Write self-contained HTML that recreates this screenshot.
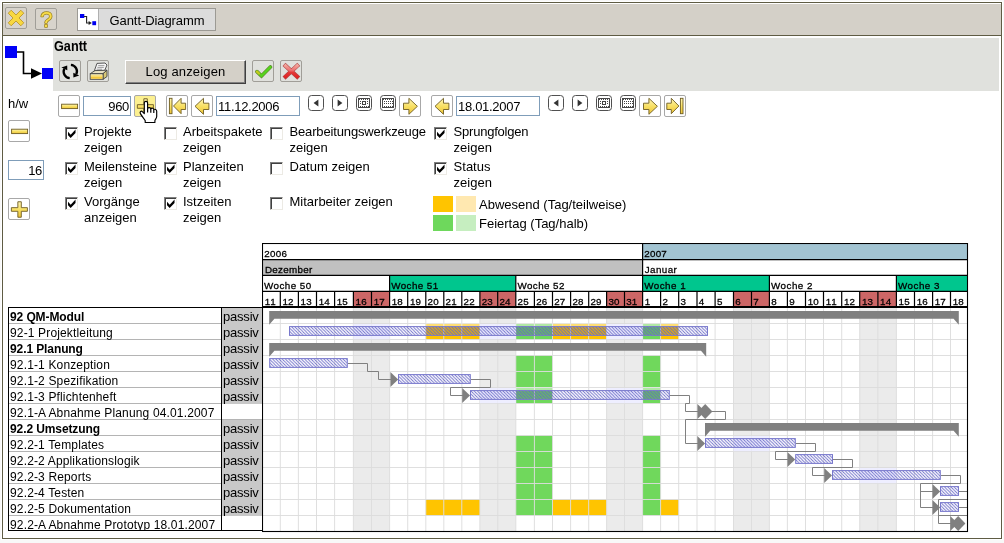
<!DOCTYPE html>
<html lang="de"><head><meta charset="utf-8"><title>Gantt-Diagramm</title>
<style>
html,body{margin:0;padding:0;}
body{width:1004px;height:543px;overflow:hidden;background:#f8f8f8;font-family:"Liberation Sans",Arial,sans-serif;font-size:13px;color:#000;position:relative;}
.abs{position:absolute;}
#frame{left:2px;top:2px;width:998px;height:535px;border:1px solid #5f5c44;background:#fff;}
#topbar{left:3px;top:3px;width:998px;height:33px;background:#d4d0c8;border-top:1px solid #fff;border-bottom:1px solid #5f5c44;box-sizing:border-box;}
.ibtn{position:absolute;width:20px;height:20px;border:1px solid #a09e98;border-radius:2px;background:#d8d4cc;}
.wbtn{position:absolute;width:20px;height:20px;border:1px solid #a8a8a8;border-radius:2px;background:#fff;}
.wbtn svg,.ibtn svg{position:absolute;left:0;top:0;}
#tab{left:77px;top:8px;width:139px;height:23px;border:1px solid #9c9a94;background:#dcdcdc;box-sizing:border-box;}
#tabicon{left:0;top:0;width:20px;height:21px;background:#fff;border-right:1px solid #b0b0b0;}
#tabtxt{left:21px;top:0;width:116px;height:21px;line-height:23px;text-align:center;font-size:13px;letter-spacing:-0.08px;}
#panel{left:53px;top:38px;width:946px;height:53px;background:#e0e1dd;}
#ptitle{left:54px;top:39px;font-weight:bold;font-size:14px;line-height:15px;transform-origin:0 0;transform:scaleX(0.905);}
#logbtn{left:125px;top:60px;width:121px;height:24px;box-sizing:border-box;background:#d4d0c8;border:1px solid;border-color:#fff #404040 #404040 #fff;box-shadow:inset -1px -1px 0 #808080;text-align:center;line-height:21px;font-size:13px;letter-spacing:0.15px;}
.inp{position:absolute;box-sizing:border-box;border:1px solid #7f9db9;background:#fff;height:20px;line-height:20px;font-size:13px;letter-spacing:-0.3px;padding:0 1px 0 1px;}
.cb{position:absolute;width:13px;height:13px;box-sizing:border-box;border:1px solid;border-color:#808080 #eceae4 #eceae4 #808080;background:#fff;box-shadow:inset 1px 1px 0 #404040;}
.cb svg{position:absolute;left:2px;top:1px;}
.lbl{position:absolute;font-size:13px;line-height:16px;white-space:nowrap;}
.sw{position:absolute;width:20px;height:16px;}
.sbtn{position:absolute;width:14px;height:14px;border:1px solid #505050;border-radius:3.5px;background:#fff;}
#ltab{left:8px;top:307px;width:254px;height:224px;box-sizing:border-box;border:1px solid #000;border-right:none;overflow:hidden;background:#fff;}
.r{position:absolute;left:0;width:253px;height:15px;border-bottom:1px solid #b4b4b4;font-size:12px;line-height:15px;white-space:nowrap;letter-spacing:0.15px;}
.r b{letter-spacing:-0.1px;}
.r span.n{position:absolute;left:1px;top:1.5px;}
.st{position:absolute;left:213px;width:40px;height:16px;background:#c8c8c8;font-size:13px;line-height:18px;letter-spacing:-0.2px;text-indent:1px;overflow:hidden;}
#stline{left:212px;top:0;width:1px;height:224px;background:#000;}
</style></head><body><div id="root" style="position:absolute;left:0;top:0;width:1004px;height:543px;will-change:transform;">
<svg class="abs" width="0" height="0" style="left:0;top:0"><defs><linearGradient id="yg" x1="0" y1="0" x2="0" y2="1"><stop offset="0" stop-color="#fff6b8"/><stop offset="0.5" stop-color="#f8e064"/><stop offset="1" stop-color="#eec438"/></linearGradient></defs></svg>
<div class="abs" style="left:1px;top:1px;width:1002px;height:539px;background:#fff"></div>
<div id="frame" class="abs"></div>
<div id="topbar" class="abs"></div>
<div class="ibtn" style="left:5px;top:7px"><svg width="20" height="20" viewBox="0 0 20 20"><path d="M2.2 5.2 L5.2 2.2 L10 7 L14.8 2.2 L17.8 5.2 L13 10 L17.8 14.8 L14.8 17.8 L10 13 L5.2 17.8 L2.2 14.8 L7 10 Z" fill="#f8d840" stroke="#b89020" stroke-width="0.8"/></svg></div>
<div class="ibtn" style="left:35px;top:8px"><svg width="20" height="20" viewBox="0 0 20 20"><text x="10.4" y="18" text-anchor="middle" font-family="Liberation Sans, sans-serif" font-size="22" fill="#f8dc48" stroke="#9c8420" stroke-width="1.5" paint-order="stroke" stroke-linejoin="round">?</text></svg></div>
<div id="tab" class="abs"><div id="tabicon" class="abs"><svg width="20" height="21" viewBox="0 0 20 21"><rect x="2" y="5" width="4.3" height="4" fill="#0000f0"/><rect x="14.3" y="12.2" width="3.8" height="4" fill="#0000f0"/><path d="M6 7.5 H8.6 V14 H11" fill="none" stroke="#222" stroke-width="1.1"/><path d="M10.6 12 L13.8 14 L10.6 16Z" fill="#222"/></svg></div><div id="tabtxt" class="abs">Gantt-Diagramm</div></div>
<svg class="abs" style="left:0;top:40px" width="56" height="44" viewBox="0 40 56 44"><rect x="5" y="46" width="12" height="12" fill="#0000f8"/><rect x="42" y="68" width="12" height="11" fill="#0000f8"/><path d="M17 52 H23.5 V73.5 H33" fill="none" stroke="#000" stroke-width="1.6"/><path d="M31 68.2 L42 73.5 L31 78.8Z" fill="#000"/></svg>
<div id="panel" class="abs"></div>
<div id="ptitle" class="abs">Gantt</div>
<div class="ibtn" style="left:59px;top:60px;background:#e0e1dd"><svg width="20" height="20" viewBox="0 0 20 20"><path d="M9.7 17.1 A6.6 6.6 0 0 1 4.3 7.7" fill="none" stroke="#000" stroke-width="2.3"/><path d="M7.3 9.2 L1.4 6.5 L7.2 4.4Z" fill="#000"/><path d="M10.9 3.9 A6.6 6.6 0 0 1 16.3 13.3" fill="none" stroke="#000" stroke-width="2.3"/><path d="M13.3 11.8 L19.2 14.5 L13.4 16.6Z" fill="#000"/></svg></div>
<div class="ibtn" style="left:87px;top:60px;background:#e0e1dd"><svg width="20" height="20" viewBox="0 0 20 20"><path d="M9 2.4 L17 2 L19 4 L16.6 9.6 L6.2 10.2Z" fill="#f6f6f6" stroke="#444" stroke-width="0.9" stroke-linejoin="round"/><path d="M10.2 4.6H16.4M9.4 6.4H15.8M8.6 8.2H14" stroke="#888" stroke-width="0.8"/><path d="M2.2 12.7 L7 9.6 L19 9.2 L15 12.7Z" fill="#e8e2c4" stroke="#444" stroke-width="0.9" stroke-linejoin="round"/><path d="M15 12.7 L19 9.2 V15.5 L15 18.3Z" fill="#d8c878" stroke="#444" stroke-width="0.9" stroke-linejoin="round"/><rect x="2.2" y="12.7" width="12.8" height="5.6" fill="#efe6b4" stroke="#444" stroke-width="0.9"/><rect x="2.9" y="14.2" width="11.4" height="3.5" fill="#f6c83a"/><rect x="2.9" y="14.2" width="11.4" height="1.4" fill="#fbe690"/></svg></div>
<div id="logbtn" class="abs">Log anzeigen</div>
<div class="ibtn" style="left:252px;top:60px;background:#e0e1dd"><svg width="20" height="20" viewBox="0 0 20 20"><path d="M4 10.6 L8.5 15 L17.4 6" fill="none" stroke="#5e7e2c" stroke-width="3.7" stroke-linecap="round" stroke-linejoin="miter"/><path d="M4 10.6 L8.5 15 L17.4 6" fill="none" stroke="#56d21e" stroke-width="2.5" stroke-linecap="round" stroke-linejoin="miter"/><path d="M4 10.6 L6 12.5" fill="none" stroke="#c4c81e" stroke-width="2.3" stroke-linecap="round"/></svg></div>
<div class="ibtn" style="left:280px;top:60px;background:#e0e1dd"><svg width="20" height="20" viewBox="0 0 20 20"><defs><linearGradient id="rx" gradientUnits="userSpaceOnUse" x1="0" y1="3" x2="0" y2="17"><stop offset="0" stop-color="#f4b0a4"/><stop offset="0.45" stop-color="#ec7070"/><stop offset="0.6" stop-color="#e43838"/><stop offset="1" stop-color="#e02020"/></linearGradient></defs><path d="M4.6 4.8 L16.2 15.6 M16.2 4.8 L4.6 15.6" fill="none" stroke="#b04848" stroke-width="4.3" stroke-linecap="square"/><path d="M4.6 4.8 L16.2 15.6 M16.2 4.8 L4.6 15.6" fill="none" stroke="url(#rx)" stroke-width="3.2" stroke-linecap="square"/></svg></div>
<div class="lbl" style="left:8px;top:96px">h/w</div>
<div class="wbtn" style="left:58px;top:95px;background:#fff"><svg width="20" height="20" viewBox="0 0 20 20"><rect x="2.6" y="8.2" width="16" height="4.4" fill="url(#yg)" stroke="#6e5c20" stroke-width="0.9" stroke-linejoin="miter"/></svg></div>
<div class="inp" style="left:83px;top:96px;width:48px;text-align:right">960</div>
<div class="wbtn" style="left:134px;top:95px;background:#fcf090"><svg width="20" height="20" viewBox="0 0 20 20"><path d="M8.85 2.75 H12.3 V8.65 H18.4 V12.3 H12.3 V18.25 H8.85 V12.3 H2.35 V8.65 H8.85Z" fill="url(#yg)" stroke="#6e5c20" stroke-width="0.9" stroke-linejoin="miter"/></svg></div>
<div class="wbtn" style="left:166px;top:95px;background:#fff"><svg width="20" height="20" viewBox="0 0 20 20"><rect x="2.4" y="2.3" width="2.6" height="15.4" fill="url(#yg)" stroke="#6e5c20" stroke-width="0.9" stroke-linejoin="miter"/><path d="M6.5 10 L14.1 2.3 V7.2 H18.6 V13.5 H14.1 V17.7Z" fill="url(#yg)" stroke="#6e5c20" stroke-width="0.9" stroke-linejoin="miter"/></svg></div>
<div class="wbtn" style="left:191px;top:95px;background:#fff"><svg width="20" height="20" viewBox="0 0 20 20"><path d="M3 10.3 L11.5 2.3 V7.2 H16.9 V13.5 H11.5 V18.3Z" fill="url(#yg)" stroke="#6e5c20" stroke-width="0.9" stroke-linejoin="miter"/></svg></div>
<div class="inp" style="left:216px;top:96px;width:84px">11.12.2006</div>
<div class="sbtn" style="left:308px;top:95px"><svg class="abs" style="left:0;top:0" width="14" height="14" viewBox="0 0 14 14"><path d="M4.6 7 L9.4 3.4 V10.6Z" fill="#333"/></svg></div>
<div class="sbtn" style="left:332px;top:95px"><svg class="abs" style="left:0;top:0" width="14" height="14" viewBox="0 0 14 14"><path d="M9.4 7 L4.6 3.4 V10.6Z" fill="#333"/></svg></div>
<div class="sbtn" style="left:356px;top:95px"><svg class="abs" style="left:0;top:0" width="14" height="14" viewBox="0 0 14 14"><rect x="1" y="2" width="12" height="10" fill="#484848"/><rect x="2" y="4" width="10" height="7" fill="#fff"/><rect x="3" y="3" width="1" height="1" fill="#fff"/><rect x="5" y="3" width="1" height="1" fill="#fff"/><rect x="7" y="3" width="1" height="1" fill="#fff"/><rect x="9" y="3" width="1" height="1" fill="#fff"/><rect x="11" y="3" width="1" height="1" fill="#fff"/><rect x="3" y="10" width="1" height="1" fill="#484848"/><rect x="5" y="10" width="1" height="1" fill="#484848"/><rect x="7" y="10" width="1" height="1" fill="#484848"/><rect x="9" y="10" width="1" height="1" fill="#484848"/><rect x="11" y="10" width="1" height="1" fill="#484848"/><rect x="3" y="5" width="1" height="1" fill="#444"/><rect x="10" y="5" width="1" height="1" fill="#444"/><rect x="3" y="7" width="1" height="1" fill="#444"/><rect x="10" y="7" width="1" height="1" fill="#444"/><rect x="5.5" y="5.5" width="3" height="3" fill="#fff" stroke="#444" stroke-width="1"/></svg></div>
<div class="sbtn" style="left:380px;top:95px"><svg class="abs" style="left:0;top:0" width="14" height="14" viewBox="0 0 14 14"><rect x="1" y="2" width="12" height="10" fill="#484848"/><rect x="2" y="4" width="10" height="7" fill="#fff"/><rect x="3" y="3" width="1" height="1" fill="#fff"/><rect x="5" y="3" width="1" height="1" fill="#fff"/><rect x="7" y="3" width="1" height="1" fill="#fff"/><rect x="9" y="3" width="1" height="1" fill="#fff"/><rect x="11" y="3" width="1" height="1" fill="#fff"/><rect x="3" y="10" width="1" height="1" fill="#484848"/><rect x="5" y="10" width="1" height="1" fill="#484848"/><rect x="7" y="10" width="1" height="1" fill="#484848"/><rect x="9" y="10" width="1" height="1" fill="#484848"/><rect x="11" y="10" width="1" height="1" fill="#484848"/><rect x="3" y="5" width="1" height="1" fill="#444"/><rect x="5" y="5" width="1" height="1" fill="#444"/><rect x="7" y="5" width="1" height="1" fill="#444"/><rect x="9" y="5" width="1" height="1" fill="#444"/><rect x="11" y="5" width="1" height="1" fill="#444"/><rect x="3" y="7" width="1" height="1" fill="#444"/><rect x="5" y="7" width="1" height="1" fill="#444"/><rect x="7" y="7" width="1" height="1" fill="#444"/><rect x="9" y="7" width="1" height="1" fill="#444"/><rect x="11" y="7" width="1" height="1" fill="#444"/></svg></div>
<div class="wbtn" style="left:399px;top:95px;background:#fff"><svg width="20" height="20" viewBox="0 0 20 20"><path d="M17.4 10.3 L8.9 2.3 V7.2 H3.5 V13.5 H8.9 V18.3Z" fill="url(#yg)" stroke="#6e5c20" stroke-width="0.9" stroke-linejoin="miter"/></svg></div>
<div class="wbtn" style="left:431px;top:95px;background:#fff"><svg width="20" height="20" viewBox="0 0 20 20"><path d="M3 10.3 L11.5 2.3 V7.2 H16.9 V13.5 H11.5 V18.3Z" fill="url(#yg)" stroke="#6e5c20" stroke-width="0.9" stroke-linejoin="miter"/></svg></div>
<div class="inp" style="left:456px;top:96px;width:84px">18.01.2007</div>
<div class="sbtn" style="left:548px;top:95px"><svg class="abs" style="left:0;top:0" width="14" height="14" viewBox="0 0 14 14"><path d="M4.6 7 L9.4 3.4 V10.6Z" fill="#333"/></svg></div>
<div class="sbtn" style="left:572px;top:95px"><svg class="abs" style="left:0;top:0" width="14" height="14" viewBox="0 0 14 14"><path d="M9.4 7 L4.6 3.4 V10.6Z" fill="#333"/></svg></div>
<div class="sbtn" style="left:596px;top:95px"><svg class="abs" style="left:0;top:0" width="14" height="14" viewBox="0 0 14 14"><rect x="1" y="2" width="12" height="10" fill="#484848"/><rect x="2" y="4" width="10" height="7" fill="#fff"/><rect x="3" y="3" width="1" height="1" fill="#fff"/><rect x="5" y="3" width="1" height="1" fill="#fff"/><rect x="7" y="3" width="1" height="1" fill="#fff"/><rect x="9" y="3" width="1" height="1" fill="#fff"/><rect x="11" y="3" width="1" height="1" fill="#fff"/><rect x="3" y="10" width="1" height="1" fill="#484848"/><rect x="5" y="10" width="1" height="1" fill="#484848"/><rect x="7" y="10" width="1" height="1" fill="#484848"/><rect x="9" y="10" width="1" height="1" fill="#484848"/><rect x="11" y="10" width="1" height="1" fill="#484848"/><rect x="3" y="5" width="1" height="1" fill="#444"/><rect x="10" y="5" width="1" height="1" fill="#444"/><rect x="3" y="7" width="1" height="1" fill="#444"/><rect x="10" y="7" width="1" height="1" fill="#444"/><rect x="5.5" y="5.5" width="3" height="3" fill="#fff" stroke="#444" stroke-width="1"/></svg></div>
<div class="sbtn" style="left:620px;top:95px"><svg class="abs" style="left:0;top:0" width="14" height="14" viewBox="0 0 14 14"><rect x="1" y="2" width="12" height="10" fill="#484848"/><rect x="2" y="4" width="10" height="7" fill="#fff"/><rect x="3" y="3" width="1" height="1" fill="#fff"/><rect x="5" y="3" width="1" height="1" fill="#fff"/><rect x="7" y="3" width="1" height="1" fill="#fff"/><rect x="9" y="3" width="1" height="1" fill="#fff"/><rect x="11" y="3" width="1" height="1" fill="#fff"/><rect x="3" y="10" width="1" height="1" fill="#484848"/><rect x="5" y="10" width="1" height="1" fill="#484848"/><rect x="7" y="10" width="1" height="1" fill="#484848"/><rect x="9" y="10" width="1" height="1" fill="#484848"/><rect x="11" y="10" width="1" height="1" fill="#484848"/><rect x="3" y="5" width="1" height="1" fill="#444"/><rect x="5" y="5" width="1" height="1" fill="#444"/><rect x="7" y="5" width="1" height="1" fill="#444"/><rect x="9" y="5" width="1" height="1" fill="#444"/><rect x="11" y="5" width="1" height="1" fill="#444"/><rect x="3" y="7" width="1" height="1" fill="#444"/><rect x="5" y="7" width="1" height="1" fill="#444"/><rect x="7" y="7" width="1" height="1" fill="#444"/><rect x="9" y="7" width="1" height="1" fill="#444"/><rect x="11" y="7" width="1" height="1" fill="#444"/></svg></div>
<div class="wbtn" style="left:639px;top:95px;background:#fff"><svg width="20" height="20" viewBox="0 0 20 20"><path d="M17.4 10.3 L8.9 2.3 V7.2 H3.5 V13.5 H8.9 V18.3Z" fill="url(#yg)" stroke="#6e5c20" stroke-width="0.9" stroke-linejoin="miter"/></svg></div>
<div class="wbtn" style="left:664px;top:95px;background:#fff"><svg width="20" height="20" viewBox="0 0 20 20"><rect x="15.4" y="2.3" width="2.6" height="15.4" fill="url(#yg)" stroke="#6e5c20" stroke-width="0.9" stroke-linejoin="miter"/><path d="M13.9 10 L6.3 2.3 V7.2 H1.8 V13.5 H6.3 V17.7Z" fill="url(#yg)" stroke="#6e5c20" stroke-width="0.9" stroke-linejoin="miter"/></svg></div>
<svg class="abs" style="left:138px;top:100px" width="22" height="25" viewBox="0 0 22 25"><path d="M6.3 2.8 C6.3 0.8 9.6 0.8 9.6 2.8 V8.4 C10.4 7.2 12.6 7.4 12.8 8.8 C13.6 7.8 15.6 8 15.8 9.6 C16.8 8.8 18.7 9.4 18.7 11.2 V16.6 C18.7 18.4 17 19.4 16.9 20.6 V22.5 H7.2 V20.6 C6 18.6 4 16.4 2.4 13.6 C1.4 11.8 3.2 10.4 4.6 11.8 L6.3 13.6 Z" fill="#fff" stroke="#000" stroke-width="1.15" stroke-linejoin="round"/><path d="M9.6 8.4V12.6M12.8 9V12.8M15.8 10V13" stroke="#000" stroke-width="1.2"/></svg>
<div class="wbtn" style="left:8px;top:120px;background:#fff"><svg width="20" height="20" viewBox="0 0 20 20"><rect x="2.6" y="8.2" width="16" height="4.4" fill="url(#yg)" stroke="#6e5c20" stroke-width="0.9" stroke-linejoin="miter"/></svg></div>
<div class="inp" style="left:8px;top:160px;width:36px;text-align:right">16</div>
<div class="wbtn" style="left:8px;top:198px;background:#fff"><svg width="20" height="20" viewBox="0 0 20 20"><path d="M8.85 2.75 H12.3 V8.65 H18.4 V12.3 H12.3 V18.25 H8.85 V12.3 H2.35 V8.65 H8.85Z" fill="url(#yg)" stroke="#6e5c20" stroke-width="0.9" stroke-linejoin="miter"/></svg></div>
<div class="cb" style="left:65px;top:127px"><svg width="8.6" height="9" viewBox="0 -0.5 8 8" preserveAspectRatio="none"><path d="M0 2 L2.5 4.5 L7 0 V3 L2.5 7.5 L0 5Z" fill="#000"/></svg></div>
<div class="lbl" style="left:84px;top:124px">Projekte<br>zeigen</div>
<div class="cb" style="left:164px;top:127px"></div>
<div class="lbl" style="left:183px;top:124px">Arbeitspakete<br>zeigen</div>
<div class="cb" style="left:270px;top:127px"></div>
<div class="lbl" style="left:289.5px;top:124px"><span style="letter-spacing:-0.15px">Bearbeitungswerkzeuge</span><br>zeigen</div>
<div class="cb" style="left:434px;top:127px"><svg width="8.6" height="9" viewBox="0 -0.5 8 8" preserveAspectRatio="none"><path d="M0 2 L2.5 4.5 L7 0 V3 L2.5 7.5 L0 5Z" fill="#000"/></svg></div>
<div class="lbl" style="left:453.6px;top:124px"><span style="letter-spacing:-0.22px">Sprungfolgen</span><br>zeigen</div>
<div class="cb" style="left:65px;top:162px"><svg width="8.6" height="9" viewBox="0 -0.5 8 8" preserveAspectRatio="none"><path d="M0 2 L2.5 4.5 L7 0 V3 L2.5 7.5 L0 5Z" fill="#000"/></svg></div>
<div class="lbl" style="left:84px;top:159px">Meilensteine<br>zeigen</div>
<div class="cb" style="left:164px;top:162px"><svg width="8.6" height="9" viewBox="0 -0.5 8 8" preserveAspectRatio="none"><path d="M0 2 L2.5 4.5 L7 0 V3 L2.5 7.5 L0 5Z" fill="#000"/></svg></div>
<div class="lbl" style="left:183px;top:159px">Planzeiten<br>zeigen</div>
<div class="cb" style="left:270px;top:162px"></div>
<div class="lbl" style="left:289.5px;top:159px">Datum zeigen</div>
<div class="cb" style="left:434px;top:162px"><svg width="8.6" height="9" viewBox="0 -0.5 8 8" preserveAspectRatio="none"><path d="M0 2 L2.5 4.5 L7 0 V3 L2.5 7.5 L0 5Z" fill="#000"/></svg></div>
<div class="lbl" style="left:453.6px;top:159px">Status<br>zeigen</div>
<div class="cb" style="left:65px;top:197px"><svg width="8.6" height="9" viewBox="0 -0.5 8 8" preserveAspectRatio="none"><path d="M0 2 L2.5 4.5 L7 0 V3 L2.5 7.5 L0 5Z" fill="#000"/></svg></div>
<div class="lbl" style="left:84px;top:194px">Vorgänge<br>anzeigen</div>
<div class="cb" style="left:164px;top:197px"><svg width="8.6" height="9" viewBox="0 -0.5 8 8" preserveAspectRatio="none"><path d="M0 2 L2.5 4.5 L7 0 V3 L2.5 7.5 L0 5Z" fill="#000"/></svg></div>
<div class="lbl" style="left:183px;top:194px">Istzeiten<br>zeigen</div>
<div class="cb" style="left:270px;top:197px"></div>
<div class="lbl" style="left:289.5px;top:194px">Mitarbeiter zeigen</div>
<div class="sw" style="left:433px;top:196px;background:#ffc400"></div><div class="sw" style="left:456px;top:196px;background:#ffe8b0"></div>
<div class="sw" style="left:433px;top:215px;background:#6ed85c"></div><div class="sw" style="left:456px;top:215px;background:#c6eec0"></div>
<div class="lbl" style="left:479px;top:197px">Abwesend (Tag/teilweise)</div>
<div class="lbl" style="left:479px;top:216px">Feiertag (Tag/halb)</div>
<div id="ltab" class="abs">
<div class="r" style="top:0px"><span class="n"><b>92 QM-Modul</b></span></div>
<div class="st" style="top:0px">passiv</div>
<div class="r" style="top:16px"><span class="n">92-1 Projektleitung</span></div>
<div class="st" style="top:16px">passiv</div>
<div class="r" style="top:32px"><span class="n"><b>92.1 Planung</b></span></div>
<div class="st" style="top:32px">passiv</div>
<div class="r" style="top:48px"><span class="n">92.1-1 Konzeption</span></div>
<div class="st" style="top:48px">passiv</div>
<div class="r" style="top:64px"><span class="n">92.1-2 Spezifikation</span></div>
<div class="st" style="top:64px">passiv</div>
<div class="r" style="top:80px"><span class="n">92.1-3 Pflichtenheft</span></div>
<div class="st" style="top:80px">passiv</div>
<div class="r" style="top:96px"><span class="n">92.1-A Abnahme Planung 04.01.2007</span></div>
<div class="r" style="top:112px"><span class="n"><b>92.2 Umsetzung</b></span></div>
<div class="st" style="top:112px">passiv</div>
<div class="r" style="top:128px"><span class="n">92.2-1 Templates</span></div>
<div class="st" style="top:128px">passiv</div>
<div class="r" style="top:144px"><span class="n">92.2-2 Applikationslogik</span></div>
<div class="st" style="top:144px">passiv</div>
<div class="r" style="top:160px"><span class="n">92.2-3 Reports</span></div>
<div class="st" style="top:160px">passiv</div>
<div class="r" style="top:176px"><span class="n">92.2-4 Testen</span></div>
<div class="st" style="top:176px">passiv</div>
<div class="r" style="top:192px"><span class="n">92.2-5 Dokumentation</span></div>
<div class="st" style="top:192px">passiv</div>
<div class="r" style="top:208px"><span class="n">92.2-A Abnahme Prototyp 18.01.2007</span></div>
<div id="stline" class="abs"></div>
</div>
<svg class="abs" style="left:262px;top:243px" width="707" height="290" viewBox="262 243 707 290" font-family="Liberation Sans, Arial, sans-serif">
<defs><pattern id="hatch" width="3.2" height="3.2" patternUnits="userSpaceOnUse"><path d="M-1 -1 L4.2 4.2 M-1 2.2 L1 4.2 M2.2 -1 L4.2 1" stroke="#6666c6" stroke-width="0.85"/></pattern></defs>
<rect x="263" y="244" width="704.5" height="287" fill="#fff"/>
<rect x="642.60" y="244" width="324.70" height="16" fill="#a2c4d2"/>
<rect x="263" y="260" width="379.60" height="15" fill="#c0c0c0"/>
<rect x="389.60" y="276" width="126.20" height="15" fill="#00c68e"/>
<rect x="642.60" y="276" width="126.80" height="15" fill="#00c68e"/>
<rect x="896.40" y="276" width="70.90" height="15" fill="#00c68e"/>
<rect x="353.40" y="292" width="18.10" height="15" fill="#cc6666"/>
<rect x="353.40" y="308" width="18.10" height="223" fill="#ebebeb"/>
<rect x="371.50" y="292" width="18.10" height="15" fill="#cc6666"/>
<rect x="371.50" y="308" width="18.10" height="223" fill="#ebebeb"/>
<rect x="479.90" y="292" width="17.80" height="15" fill="#cc6666"/>
<rect x="479.90" y="308" width="17.80" height="223" fill="#ebebeb"/>
<rect x="497.70" y="292" width="18.10" height="15" fill="#cc6666"/>
<rect x="497.70" y="308" width="18.10" height="223" fill="#ebebeb"/>
<rect x="606.60" y="292" width="17.90" height="15" fill="#cc6666"/>
<rect x="606.60" y="308" width="17.90" height="223" fill="#ebebeb"/>
<rect x="624.50" y="292" width="18.10" height="15" fill="#cc6666"/>
<rect x="624.50" y="308" width="18.10" height="223" fill="#ebebeb"/>
<rect x="733.50" y="292" width="18.00" height="15" fill="#cc6666"/>
<rect x="733.50" y="308" width="18.00" height="223" fill="#ebebeb"/>
<rect x="751.50" y="292" width="17.90" height="15" fill="#cc6666"/>
<rect x="751.50" y="308" width="17.90" height="223" fill="#ebebeb"/>
<rect x="859.70" y="292" width="18.20" height="15" fill="#cc6666"/>
<rect x="859.70" y="308" width="18.20" height="223" fill="#ebebeb"/>
<rect x="877.90" y="292" width="18.50" height="15" fill="#cc6666"/>
<rect x="877.90" y="308" width="18.50" height="223" fill="#ebebeb"/>
<rect x="515.80" y="323.4" width="18.60" height="16" fill="#70d85c"/>
<rect x="534.40" y="323.4" width="18.10" height="16" fill="#70d85c"/>
<rect x="642.60" y="323.4" width="18.00" height="16" fill="#70d85c"/>
<rect x="515.80" y="355.4" width="18.60" height="16" fill="#70d85c"/>
<rect x="534.40" y="355.4" width="18.10" height="16" fill="#70d85c"/>
<rect x="642.60" y="355.4" width="18.00" height="16" fill="#70d85c"/>
<rect x="515.80" y="371.4" width="18.60" height="16" fill="#70d85c"/>
<rect x="534.40" y="371.4" width="18.10" height="16" fill="#70d85c"/>
<rect x="642.60" y="371.4" width="18.00" height="16" fill="#70d85c"/>
<rect x="515.80" y="387.4" width="18.60" height="16" fill="#70d85c"/>
<rect x="534.40" y="387.4" width="18.10" height="16" fill="#70d85c"/>
<rect x="642.60" y="387.4" width="18.00" height="16" fill="#70d85c"/>
<rect x="515.80" y="435.4" width="18.60" height="16" fill="#70d85c"/>
<rect x="534.40" y="435.4" width="18.10" height="16" fill="#70d85c"/>
<rect x="642.60" y="435.4" width="18.00" height="16" fill="#70d85c"/>
<rect x="515.80" y="451.4" width="18.60" height="16" fill="#70d85c"/>
<rect x="534.40" y="451.4" width="18.10" height="16" fill="#70d85c"/>
<rect x="642.60" y="451.4" width="18.00" height="16" fill="#70d85c"/>
<rect x="515.80" y="467.4" width="18.60" height="16" fill="#70d85c"/>
<rect x="534.40" y="467.4" width="18.10" height="16" fill="#70d85c"/>
<rect x="642.60" y="467.4" width="18.00" height="16" fill="#70d85c"/>
<rect x="515.80" y="483.4" width="18.60" height="16" fill="#70d85c"/>
<rect x="534.40" y="483.4" width="18.10" height="16" fill="#70d85c"/>
<rect x="642.60" y="483.4" width="18.00" height="16" fill="#70d85c"/>
<rect x="515.80" y="499.4" width="18.60" height="16" fill="#70d85c"/>
<rect x="534.40" y="499.4" width="18.10" height="16" fill="#70d85c"/>
<rect x="642.60" y="499.4" width="18.00" height="16" fill="#70d85c"/>
<rect x="425.80" y="323.4" width="18.00" height="16" fill="#ffc400"/>
<rect x="443.80" y="323.4" width="18.00" height="16" fill="#ffc400"/>
<rect x="461.80" y="323.4" width="18.10" height="16" fill="#ffc400"/>
<rect x="552.50" y="323.4" width="18.10" height="16" fill="#ffc400"/>
<rect x="570.60" y="323.4" width="18.10" height="16" fill="#ffc400"/>
<rect x="588.70" y="323.4" width="17.90" height="16" fill="#ffc400"/>
<rect x="660.60" y="323.4" width="18.10" height="16" fill="#ffc400"/>
<rect x="425.80" y="499.4" width="18.00" height="16" fill="#ffc400"/>
<rect x="443.80" y="499.4" width="18.00" height="16" fill="#ffc400"/>
<rect x="461.80" y="499.4" width="18.10" height="16" fill="#ffc400"/>
<rect x="552.50" y="499.4" width="18.10" height="16" fill="#ffc400"/>
<rect x="570.60" y="499.4" width="18.10" height="16" fill="#ffc400"/>
<rect x="588.70" y="499.4" width="17.90" height="16" fill="#ffc400"/>
<rect x="660.60" y="499.4" width="18.10" height="16" fill="#ffc400"/>
<path d="M280.30 308V531M298.40 308V531M316.50 308V531M334.60 308V531M353.40 308V531M371.50 308V531M389.60 308V531M407.70 308V531M425.80 308V531M443.80 308V531M461.80 308V531M479.90 308V531M497.70 308V531M515.80 308V531M534.40 308V531M552.50 308V531M570.60 308V531M588.70 308V531M606.60 308V531M624.50 308V531M642.60 308V531M660.60 308V531M678.70 308V531M697.00 308V531M715.10 308V531M733.50 308V531M751.50 308V531M769.40 308V531M787.40 308V531M805.50 308V531M823.50 308V531M841.70 308V531M859.70 308V531M877.90 308V531M896.40 308V531M914.50 308V531M932.60 308V531M950.50 308V531M263 323.5H967M263 339.5H967M263 355.5H967M263 371.5H967M263 387.5H967M263 403.5H967M263 419.5H967M263 435.5H967M263 451.5H967M263 467.5H967M263 483.5H967M263 499.5H967M263 515.5H967" stroke="#dcdcdc" stroke-width="1" fill="none" stroke-opacity="0.9"/>
<path d="M262 259.6H967.5M262 275.4H967.5M262 291.4H967.5" stroke="#000" stroke-width="1.3"/>
<path d="M262 307H967.5" stroke="#000" stroke-width="2"/>
<path d="M280.30 292V307M298.40 292V307M316.50 292V307M334.60 292V307M353.40 292V307M371.50 292V307M389.60 292V307M407.70 292V307M425.80 292V307M443.80 292V307M461.80 292V307M479.90 292V307M497.70 292V307M515.80 292V307M534.40 292V307M552.50 292V307M570.60 292V307M588.70 292V307M606.60 292V307M624.50 292V307M642.60 292V307M660.60 292V307M678.70 292V307M697.00 292V307M715.10 292V307M733.50 292V307M751.50 292V307M769.40 292V307M787.40 292V307M805.50 292V307M823.50 292V307M841.70 292V307M859.70 292V307M877.90 292V307M896.40 292V307M914.50 292V307M932.60 292V307M950.50 292V307M389.60 276V292M515.80 276V292M642.60 276V292M769.40 276V292M896.40 276V292M642.60 244V276" stroke="#000" stroke-width="1.2" fill="none"/>
<text x="264.3" y="256.9" font-size="9.8" textLength="22.6" lengthAdjust="spacing" stroke="#000" stroke-width="0.28">2006</text>
<text x="644.2" y="256.9" font-size="9.8" textLength="22.6" lengthAdjust="spacing" stroke="#000" stroke-width="0.28">2007</text>
<text x="265.0" y="272.8" font-size="9.8" textLength="47.2" lengthAdjust="spacing" stroke="#000" stroke-width="0.28">Dezember</text>
<text x="644.8" y="272.8" font-size="9.8" textLength="32" lengthAdjust="spacing" stroke="#000" stroke-width="0.28">Januar</text>
<text x="264.1" y="289" font-size="9.8" textLength="47" lengthAdjust="spacing" stroke="#000" stroke-width="0.28">Woche 50</text>
<text x="391.2" y="289" font-size="9.8" textLength="47" lengthAdjust="spacing" stroke="#000" stroke-width="0.28">Woche 51</text>
<text x="517.4" y="289" font-size="9.8" textLength="47" lengthAdjust="spacing" stroke="#000" stroke-width="0.28">Woche 52</text>
<text x="644.2" y="289" font-size="9.8" textLength="41.5" lengthAdjust="spacing" stroke="#000" stroke-width="0.28">Woche 1</text>
<text x="771.0" y="289" font-size="9.8" textLength="41.5" lengthAdjust="spacing" stroke="#000" stroke-width="0.28">Woche 2</text>
<text x="898.0" y="289" font-size="9.8" textLength="41.5" lengthAdjust="spacing" stroke="#000" stroke-width="0.28">Woche 3</text>
<text x="264.7" y="304.7" font-size="9.8" textLength="11" lengthAdjust="spacing" stroke="#000" stroke-width="0.28">11</text>
<text x="282.5" y="304.7" font-size="9.8" textLength="11" lengthAdjust="spacing" stroke="#000" stroke-width="0.28">12</text>
<text x="300.6" y="304.7" font-size="9.8" textLength="11" lengthAdjust="spacing" stroke="#000" stroke-width="0.28">13</text>
<text x="318.7" y="304.7" font-size="9.8" textLength="11" lengthAdjust="spacing" stroke="#000" stroke-width="0.28">14</text>
<text x="336.8" y="304.7" font-size="9.8" textLength="11" lengthAdjust="spacing" stroke="#000" stroke-width="0.28">15</text>
<text x="355.6" y="304.7" font-size="9.8" textLength="11" lengthAdjust="spacing" stroke="#000" stroke-width="0.28">16</text>
<text x="373.7" y="304.7" font-size="9.8" textLength="11" lengthAdjust="spacing" stroke="#000" stroke-width="0.28">17</text>
<text x="391.8" y="304.7" font-size="9.8" textLength="11" lengthAdjust="spacing" stroke="#000" stroke-width="0.28">18</text>
<text x="409.9" y="304.7" font-size="9.8" textLength="11" lengthAdjust="spacing" stroke="#000" stroke-width="0.28">19</text>
<text x="427.6" y="304.7" font-size="9.8" textLength="11" lengthAdjust="spacing" stroke="#000" stroke-width="0.28">20</text>
<text x="445.6" y="304.7" font-size="9.8" textLength="11" lengthAdjust="spacing" stroke="#000" stroke-width="0.28">21</text>
<text x="463.6" y="304.7" font-size="9.8" textLength="11" lengthAdjust="spacing" stroke="#000" stroke-width="0.28">22</text>
<text x="481.7" y="304.7" font-size="9.8" textLength="11" lengthAdjust="spacing" stroke="#000" stroke-width="0.28">23</text>
<text x="499.5" y="304.7" font-size="9.8" textLength="11" lengthAdjust="spacing" stroke="#000" stroke-width="0.28">24</text>
<text x="517.6" y="304.7" font-size="9.8" textLength="11" lengthAdjust="spacing" stroke="#000" stroke-width="0.28">25</text>
<text x="536.2" y="304.7" font-size="9.8" textLength="11" lengthAdjust="spacing" stroke="#000" stroke-width="0.28">26</text>
<text x="554.3" y="304.7" font-size="9.8" textLength="11" lengthAdjust="spacing" stroke="#000" stroke-width="0.28">27</text>
<text x="572.4" y="304.7" font-size="9.8" textLength="11" lengthAdjust="spacing" stroke="#000" stroke-width="0.28">28</text>
<text x="590.5" y="304.7" font-size="9.8" textLength="11" lengthAdjust="spacing" stroke="#000" stroke-width="0.28">29</text>
<text x="608.4" y="304.7" font-size="9.8" textLength="11" lengthAdjust="spacing" stroke="#000" stroke-width="0.28">30</text>
<text x="626.3" y="304.7" font-size="9.8" textLength="11" lengthAdjust="spacing" stroke="#000" stroke-width="0.28">31</text>
<text x="644.8" y="304.7" font-size="9.8" textLength="5.5" lengthAdjust="spacing" stroke="#000" stroke-width="0.28">1</text>
<text x="662.4" y="304.7" font-size="9.8" textLength="5.5" lengthAdjust="spacing" stroke="#000" stroke-width="0.28">2</text>
<text x="680.5" y="304.7" font-size="9.8" textLength="5.5" lengthAdjust="spacing" stroke="#000" stroke-width="0.28">3</text>
<text x="698.8" y="304.7" font-size="9.8" textLength="5.5" lengthAdjust="spacing" stroke="#000" stroke-width="0.28">4</text>
<text x="716.9" y="304.7" font-size="9.8" textLength="5.5" lengthAdjust="spacing" stroke="#000" stroke-width="0.28">5</text>
<text x="735.3" y="304.7" font-size="9.8" textLength="5.5" lengthAdjust="spacing" stroke="#000" stroke-width="0.28">6</text>
<text x="753.3" y="304.7" font-size="9.8" textLength="5.5" lengthAdjust="spacing" stroke="#000" stroke-width="0.28">7</text>
<text x="771.2" y="304.7" font-size="9.8" textLength="5.5" lengthAdjust="spacing" stroke="#000" stroke-width="0.28">8</text>
<text x="789.2" y="304.7" font-size="9.8" textLength="5.5" lengthAdjust="spacing" stroke="#000" stroke-width="0.28">9</text>
<text x="807.7" y="304.7" font-size="9.8" textLength="11" lengthAdjust="spacing" stroke="#000" stroke-width="0.28">10</text>
<text x="825.7" y="304.7" font-size="9.8" textLength="11" lengthAdjust="spacing" stroke="#000" stroke-width="0.28">11</text>
<text x="843.9" y="304.7" font-size="9.8" textLength="11" lengthAdjust="spacing" stroke="#000" stroke-width="0.28">12</text>
<text x="861.9" y="304.7" font-size="9.8" textLength="11" lengthAdjust="spacing" stroke="#000" stroke-width="0.28">13</text>
<text x="880.1" y="304.7" font-size="9.8" textLength="11" lengthAdjust="spacing" stroke="#000" stroke-width="0.28">14</text>
<text x="898.6" y="304.7" font-size="9.8" textLength="11" lengthAdjust="spacing" stroke="#000" stroke-width="0.28">15</text>
<text x="916.7" y="304.7" font-size="9.8" textLength="11" lengthAdjust="spacing" stroke="#000" stroke-width="0.28">16</text>
<text x="934.8" y="304.7" font-size="9.8" textLength="11" lengthAdjust="spacing" stroke="#000" stroke-width="0.28">17</text>
<text x="952.7" y="304.7" font-size="9.8" textLength="11" lengthAdjust="spacing" stroke="#000" stroke-width="0.28">18</text>
<path d="M269.2 311.1 H958.8 V324.7 L953.6 318.7 H274.4 L269.2 324.7Z" fill="#808080"/>
<rect x="353.4" y="324" width="18.1" height="15.2" fill="#eeeeff"/><rect x="371.5" y="324" width="18.1" height="15.2" fill="#eeeeff"/><rect x="479.9" y="324" width="17.8" height="15.2" fill="#eeeeff"/><rect x="497.7" y="324" width="18.1" height="15.2" fill="#eeeeff"/><rect x="606.6" y="324" width="17.9" height="15.2" fill="#eeeeff"/><rect x="624.5" y="324" width="18.1" height="15.2" fill="#eeeeff"/><rect x="425.8" y="323.4" width="18.0" height="3.2" fill="#fff" fill-opacity="0.45"/><rect x="443.8" y="323.4" width="18.0" height="3.2" fill="#fff" fill-opacity="0.45"/><rect x="461.8" y="323.4" width="18.1" height="3.2" fill="#fff" fill-opacity="0.45"/><rect x="515.8" y="323.4" width="18.6" height="3.2" fill="#fff" fill-opacity="0.45"/><rect x="534.4" y="323.4" width="18.1" height="3.2" fill="#fff" fill-opacity="0.45"/><rect x="552.5" y="323.4" width="18.1" height="3.2" fill="#fff" fill-opacity="0.45"/><rect x="570.6" y="323.4" width="18.1" height="3.2" fill="#fff" fill-opacity="0.45"/><rect x="588.7" y="323.4" width="17.9" height="3.2" fill="#fff" fill-opacity="0.45"/><rect x="642.6" y="323.4" width="18.0" height="3.2" fill="#fff" fill-opacity="0.45"/><rect x="660.6" y="323.4" width="18.1" height="3.2" fill="#fff" fill-opacity="0.45"/><rect x="425.8" y="326.6" width="18.0" height="8.8" fill="#303890" fill-opacity="0.17"/><rect x="443.8" y="326.6" width="18.0" height="8.8" fill="#303890" fill-opacity="0.17"/><rect x="461.8" y="326.6" width="18.1" height="8.8" fill="#303890" fill-opacity="0.17"/><rect x="515.8" y="326.6" width="18.6" height="8.8" fill="#303890" fill-opacity="0.17"/><rect x="534.4" y="326.6" width="18.1" height="8.8" fill="#303890" fill-opacity="0.17"/><rect x="552.5" y="326.6" width="18.1" height="8.8" fill="#303890" fill-opacity="0.17"/><rect x="570.6" y="326.6" width="18.1" height="8.8" fill="#303890" fill-opacity="0.17"/><rect x="588.7" y="326.6" width="17.9" height="8.8" fill="#303890" fill-opacity="0.17"/><rect x="642.6" y="326.6" width="18.0" height="8.8" fill="#303890" fill-opacity="0.17"/><rect x="660.6" y="326.6" width="18.1" height="8.8" fill="#303890" fill-opacity="0.17"/><rect x="289.5" y="326.6" width="418.0" height="8.8" fill="url(#hatch)" stroke="#7878cc" stroke-width="1"/>
<path d="M269.2 343.1 H706.2 V356.7 L701.0 350.7 H274.4 L269.2 356.7Z" fill="#808080"/>
<rect x="269.7" y="358.6" width="77.6" height="8.8" fill="url(#hatch)" stroke="#7878cc" stroke-width="1"/>
<rect x="398.5" y="374.6" width="71.8" height="8.8" fill="url(#hatch)" stroke="#7878cc" stroke-width="1"/>
<rect x="479.9" y="388" width="17.8" height="15.2" fill="#eeeeff"/><rect x="497.7" y="388" width="18.1" height="15.2" fill="#eeeeff"/><rect x="606.6" y="388" width="17.9" height="15.2" fill="#eeeeff"/><rect x="624.5" y="388" width="18.1" height="15.2" fill="#eeeeff"/><rect x="515.8" y="387.4" width="18.6" height="3.2" fill="#fff" fill-opacity="0.45"/><rect x="534.4" y="387.4" width="18.1" height="3.2" fill="#fff" fill-opacity="0.45"/><rect x="642.6" y="387.4" width="18.0" height="3.2" fill="#fff" fill-opacity="0.45"/><rect x="515.8" y="390.6" width="18.6" height="8.8" fill="#303890" fill-opacity="0.17"/><rect x="534.4" y="390.6" width="18.1" height="8.8" fill="#303890" fill-opacity="0.17"/><rect x="642.6" y="390.6" width="18.0" height="8.8" fill="#303890" fill-opacity="0.17"/><rect x="470.5" y="390.6" width="198.8" height="8.8" fill="url(#hatch)" stroke="#7878cc" stroke-width="1"/>
<path d="M705.0 423.1 H958.8 V436.7 L953.6 430.7 H710.2 L705.0 436.7Z" fill="#808080"/>
<rect x="733.5" y="436" width="18.0" height="15.2" fill="#eeeeff"/><rect x="751.5" y="436" width="17.9" height="15.2" fill="#eeeeff"/><rect x="705.5" y="438.6" width="89.8" height="8.8" fill="url(#hatch)" stroke="#7878cc" stroke-width="1"/>
<rect x="795.7" y="454.6" width="36.8" height="8.8" fill="url(#hatch)" stroke="#7878cc" stroke-width="1"/>
<rect x="859.7" y="468" width="18.2" height="15.2" fill="#eeeeff"/><rect x="877.9" y="468" width="18.5" height="15.2" fill="#eeeeff"/><rect x="832.5" y="470.6" width="107.8" height="8.8" fill="url(#hatch)" stroke="#7878cc" stroke-width="1"/>
<rect x="940.5" y="486.6" width="18.0" height="8.8" fill="url(#hatch)" stroke="#7878cc" stroke-width="1"/>
<rect x="940.5" y="502.6" width="18.0" height="8.8" fill="url(#hatch)" stroke="#7878cc" stroke-width="1"/>
<path d="M348 363.5 H367.5 V371.5 H378.5 V379.5 H391" fill="none" stroke="#808080" stroke-width="1"/>
<path d="M390.4 372.1 L398.2 379.5 L390.4 386.9Z" fill="#808080"/>
<path d="M471 379.5 H490.5 V387.5 H450.5 V395.5 H463" fill="none" stroke="#808080" stroke-width="1"/>
<path d="M462.2 388.1 L470.0 395.5 L462.2 402.9Z" fill="#808080"/>
<path d="M669.8 395.5 H689.5 V403.5 H685.5 V411.5 H698" fill="none" stroke="#808080" stroke-width="1"/>
<path d="M697.4 404.1 L705.2 411.5 L697.4 418.9Z" fill="#808080"/>
<path d="M698.0 411.5 L705.2 403.9 L712.4 411.5 L705.2 419.1Z" fill="#808080"/>
<path d="M712 411.5 H725.5 V419.5 H685.5 V443.5 H698" fill="none" stroke="#808080" stroke-width="1"/>
<path d="M697.3 436.1 L705.1 443.5 L697.3 450.9Z" fill="#808080"/>
<path d="M796 443.5 H815.5 V451.5 H775.5 V459.5 H788" fill="none" stroke="#808080" stroke-width="1"/>
<path d="M787.4 452.1 L795.2 459.5 L787.4 466.9Z" fill="#808080"/>
<path d="M833 459.5 H852.5 V467.5 H812.5 V475.5 H825" fill="none" stroke="#808080" stroke-width="1"/>
<path d="M824.2 468.1 L832.0 475.5 L824.2 482.9Z" fill="#808080"/>
<path d="M941 475.5 H960.5 V483.5 H920.5 V507.5 H933 M920.5 491.5 H933" fill="none" stroke="#808080" stroke-width="1"/>
<path d="M932.4 484.1 L940.2 491.5 L932.4 498.9Z" fill="#808080"/>
<path d="M932.4 500.1 L940.2 507.5 L932.4 514.9Z" fill="#808080"/>
<path d="M959 491.5 H967.5 M959 507.5 H967.5 M968 499.5 H938.5 V523.5 H951 M968 515.5 H938.5" fill="none" stroke="#808080" stroke-width="1"/>
<path d="M950.2 516.1 L958.0 523.5 L950.2 530.9Z" fill="#808080"/>
<path d="M951.0 523.5 L958.2 515.9 L965.4 523.5 L958.2 531.1Z" fill="#808080"/>
<rect x="262.5" y="243.5" width="705" height="288" fill="none" stroke="#000" stroke-width="1.1"/>
</svg>
</div></body></html>
